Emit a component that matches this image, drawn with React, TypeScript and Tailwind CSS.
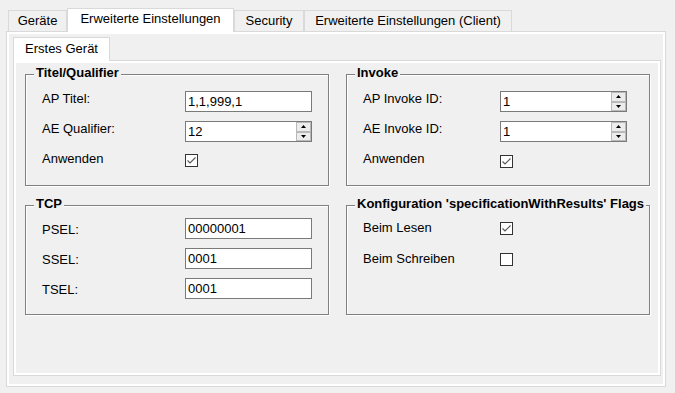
import React from 'react';

const Arrow = ({ up }: { up?: boolean }) => (
  <svg width="5" height="3" viewBox="0 0 5 3" className="block">
    <polygon points={up ? '0,3 5,3 2.5,0' : '0,0 5,0 2.5,3'} fill="#000" />
  </svg>
);

const SpinBtn = ({ up }: { up?: boolean }) => (
  <div className="flex-1 flex items-center justify-center bg-[#ececec] border border-[#b9b9b9]">
    <Arrow up={up} />
  </div>
);

const TextBox = ({ value, spin }: { value: string; spin?: boolean }) => (
  <div className="w-[127px] h-[21px] border border-[#7a7a7a] bg-white flex shrink-0">
    <span className="flex-1 pl-[2px] pt-[2px] leading-[16px]">{value}</span>
    {spin && (
      <div className="w-[15px] flex flex-col">
        <SpinBtn up />
        <SpinBtn />
      </div>
    )}
  </div>
);

const Check = ({ checked, className = '' }: { checked?: boolean; className?: string }) => (
  <div className={`w-[13px] h-[13px] border border-[#333333] bg-white shrink-0 ${className}`}>
    {checked && (
      <svg width="11" height="11" viewBox="0 0 11 11" className="block">
        <polyline points="1.5,5.5 4,8 9.5,2.5" fill="none" stroke="#5a5a5a" strokeWidth="1.2" />
      </svg>
    )}
  </div>
);

const Group = ({ title, className = '', children }: any) => (
  <div className={`relative border border-[#808080] shadow-[inset_1px_1px_0_#fff,1px_1px_0_#fff] ${className}`}>
    <span className="absolute -top-[10px] left-[8px] px-[2px] bg-[#f0f0f0] font-bold leading-[16px] whitespace-nowrap">
      {title}
    </span>
    {children}
  </div>
);

const Tab = ({ label, width, active }: { label: string; width: string; active?: boolean }) =>
  active ? (
    <div className={`${width} h-[24px] -mb-px relative z-10 bg-white border border-b-0 border-[#d9d9d9] text-center pt-[2px] leading-[16px]`}>
      {label}
    </div>
  ) : (
    <div className={`${width} h-[21px] bg-[#f0f0f0] border border-b-0 border-[#d9d9d9] text-center pt-[2px] leading-[16px]`}>
      {label}
    </div>
  );

export default function App() {
  return (
    <div className="w-[675px] h-[393px] overflow-hidden bg-[#f0f0f0] pt-[8px] text-[13px] leading-[16px] text-black font-['Liberation_Sans',Arial,sans-serif]">
      {/* outer tabs */}
      <div className="flex items-end h-[23px] pl-[8px]">
        <Tab label="Geräte" width="w-[59px]" />
        <Tab label="Erweiterte Einstellungen" width="w-[167px]" active />
        <Tab label="Security" width="w-[70px]" />
        <Tab label="Erweiterte Einstellungen (Client)" width="w-[208px]" />
      </div>

      <div className="ml-[6px] w-[660px] h-[356px] border border-[#d9d9d9] bg-white p-[2px]">
        <div className="h-full bg-[#f0f0f0] pl-[4px] pt-[3px]">
          {/* inner tabs */}
          <div className="flex items-end h-[23px]">
            <div className="w-[97px] h-[24px] -mb-px relative z-10 bg-white border border-b-0 border-[#d9d9d9] text-center pt-[3px] leading-[16px]">
              Erstes Gerät
            </div>
          </div>

          <div className="w-[648px] h-[316px] border border-[#d9d9d9] bg-white p-[2px]">
            <div className="h-full bg-[#f0f0f0] pl-[9px] pt-[11px] grid grid-cols-[304px_304px] grid-rows-[112px_110px] gap-x-[17px] gap-y-[19px]">
              <Group title="Titel/Qualifier" className="pt-[16px] pl-[16px]">
                <div className="flex flex-col gap-[9px]">
                  <div className="flex h-[21px] items-start">
                    <span className="w-[143px]">AP Titel:</span>
                    <TextBox value="1,1,999,1" />
                  </div>
                  <div className="flex h-[21px] items-start">
                    <span className="w-[143px]">AE Qualifier:</span>
                    <TextBox value="12" spin />
                  </div>
                  <div className="flex h-[21px] items-start">
                    <span className="w-[143px]">Anwenden</span>
                    <Check checked className="mt-[3px]" />
                  </div>
                </div>
              </Group>

              <Group title="Invoke" className="pt-[16px] pl-[16px]">
                <div className="flex flex-col gap-[9px]">
                  <div className="flex h-[21px] items-start">
                    <span className="w-[137px]">AP Invoke ID:</span>
                    <TextBox value="1" spin />
                  </div>
                  <div className="flex h-[21px] items-start">
                    <span className="w-[137px]">AE Invoke ID:</span>
                    <TextBox value="1" spin />
                  </div>
                  <div className="flex h-[21px] items-start">
                    <span className="w-[137px]">Anwenden</span>
                    <Check checked className="mt-[4px]" />
                  </div>
                </div>
              </Group>

              <Group title="TCP" className="pt-[12px] pl-[16px]">
                <div className="flex flex-col gap-[9px]">
                  {[
                    ['PSEL:', '00000001'],
                    ['SSEL:', '0001'],
                    ['TSEL:', '0001'],
                  ].map(([label, value]) => (
                    <div key={label} className="flex h-[21px] items-start">
                      <span className="w-[143px] mt-[4px]">{label}</span>
                      <TextBox value={value} />
                    </div>
                  ))}
                </div>
              </Group>

              <Group title="Konfiguration 'specificationWithResults' Flags" className="pt-[16px] pl-[16px]">
                <div className="flex flex-col gap-[18px]">
                  <div className="flex h-[13px] items-start">
                    <span className="w-[137px] -mt-[2px]">Beim Lesen</span>
                    <Check checked />
                  </div>
                  <div className="flex h-[13px] items-start">
                    <span className="w-[137px] -mt-[2px]">Beim Schreiben</span>
                    <Check />
                  </div>
                </div>
              </Group>
            </div>
          </div>
        </div>
      </div>
    </div>
  );
}
